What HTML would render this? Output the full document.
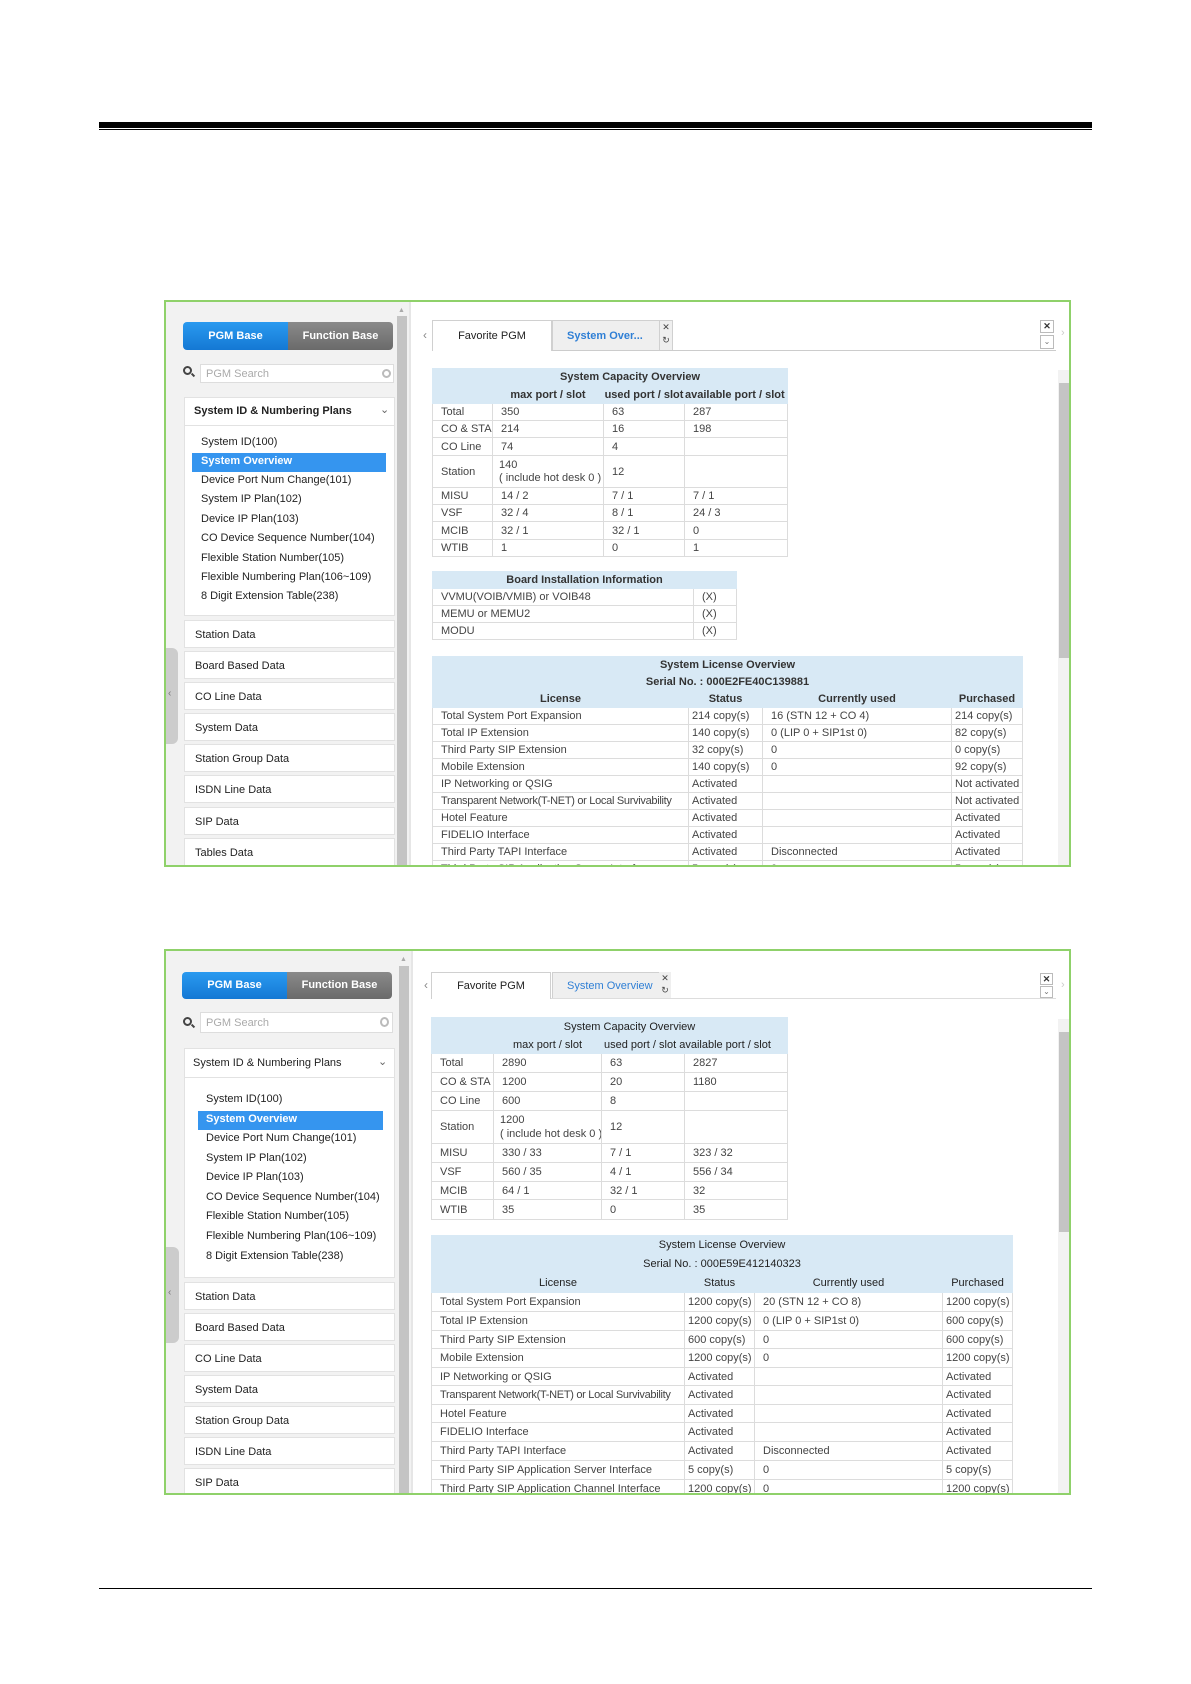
<!DOCTYPE html>
<html><head><meta charset="utf-8">
<style>
*{margin:0;padding:0;box-sizing:border-box}
body{width:1191px;height:1684px;background:#fff;position:relative;font-family:"Liberation Sans",Arial,sans-serif;color:#333;overflow:hidden}
.a{position:absolute}
.panel{position:absolute;border:2px solid #8fd16a;background:#fff;overflow:hidden}
.lp{position:absolute;background:#f2f2f2}
.btn{position:absolute;color:#fff;font-size:11px;text-align:center;font-weight:bold}
.box{position:absolute;background:#fff;border:1px solid #e2e2e2;font-size:11px;color:#222}
.item{position:absolute;font-size:11px;color:#222;white-space:nowrap}
table{position:absolute;border-collapse:collapse;table-layout:fixed;font-size:11px;color:#444}
td,th{border:1px solid #dcdcdc;padding:0 0 0 8px;white-space:nowrap;overflow:hidden;text-align:left;font-weight:normal}
th{background:#d8e9f5;color:#333;font-weight:bold;text-align:center;border-color:#d8e9f5;padding:0}
.tab{position:absolute;border:1px solid #d0d0d0;border-bottom:none;font-size:11px;text-align:center}
.srch{position:absolute;width:9px;height:9px;border:2px solid #444;border-radius:50%}
.srch:after{content:"";position:absolute;left:6px;top:6px;width:4px;height:2px;background:#444;transform:rotate(45deg)}
</style></head><body>

<div class="a" style="left:99px;top:122px;width:993px;height:6px;background:#000"></div>
<div class="a" style="left:99px;top:129px;width:993px;height:1px;background:#000"></div>
<div class="a" style="left:99px;top:1588px;width:993px;height:1px;background:#000"></div>

<!-- PANEL 1 -->
<div class="panel" style="left:164px;top:300px;width:907px;height:567px">
 <div class="lp" style="left:0;top:0;width:243px;height:565px"></div>
 <div class="a" style="left:231px;top:14px;width:10px;height:551px;background:#c4c4c4"></div>
 <div class="a" style="left:232px;top:5px;font-size:7px;color:#aaa">▲</div>
 <div class="a" style="left:243px;top:0;width:2px;height:565px;background:#e6e6e6"></div>
 <div class="a" style="left:0;top:346px;width:12px;height:96px;background:#ccc;border-radius:0 6px 6px 0"></div>
 <div class="a" style="left:2px;top:386px;font-size:10px;color:#777">‹</div>
 <div class="btn" style="left:17px;top:20px;width:105px;height:28px;line-height:28px;background:linear-gradient(#2a9af0,#1478d4);border-radius:4px 0 0 4px">PGM Base</div>
 <div class="btn" style="left:122px;top:20px;width:105px;height:28px;line-height:28px;background:linear-gradient(#8a8a8a,#6a6a6a);border-radius:0 4px 4px 0">Function Base</div>
 <div class="srch" style="left:17px;top:64px"></div>
 <div class="a" style="left:34px;top:62px;width:194px;height:19px;background:#fff;border:1px solid #ddd;font-size:11px;color:#aaa;padding:3px 5px">PGM Search</div>
 <div class="a" style="left:216px;top:67px;width:9px;height:9px;border-radius:50%;border:2px solid #bbb"></div>
 <div class="box" style="left:18px;top:95px;width:211px;height:219px"></div>
 <div class="a" style="left:18px;top:123px;width:211px;height:1px;background:#e2e2e2"></div>
 <div class="item" style="left:28px;top:103px;font-weight:bold">System ID &amp; Numbering Plans</div>
 <div class="item" style="left:214px;top:101px;color:#666">⌄</div>
 <div class="a" style="left:26px;top:151px;width:194px;height:19px;background:#3595ef"></div>
 <div class="item" style="left:35px;top:134px">System ID(100)</div>
 <div class="item" style="left:35px;top:153px;color:#fff;font-weight:bold">System Overview</div>
 <div class="item" style="left:35px;top:172px">Device Port Num Change(101)</div>
 <div class="item" style="left:35px;top:191px">System IP Plan(102)</div>
 <div class="item" style="left:35px;top:211px">Device IP Plan(103)</div>
 <div class="item" style="left:35px;top:230px">CO Device Sequence Number(104)</div>
 <div class="item" style="left:35px;top:250px">Flexible Station Number(105)</div>
 <div class="item" style="left:35px;top:269px">Flexible Numbering Plan(106~109)</div>
 <div class="item" style="left:35px;top:288px">8 Digit Extension Table(238)</div>
 <div class="box" style="left:18px;top:318px;width:211px;height:28px;padding:8px 10px">Station Data</div>
 <div class="box" style="left:18px;top:349px;width:211px;height:28px;padding:8px 10px">Board Based Data</div>
 <div class="box" style="left:18px;top:380px;width:211px;height:28px;padding:8px 10px">CO Line Data</div>
 <div class="box" style="left:18px;top:411px;width:211px;height:28px;padding:8px 10px">System Data</div>
 <div class="box" style="left:18px;top:442px;width:211px;height:28px;padding:8px 10px">Station Group Data</div>
 <div class="box" style="left:18px;top:473px;width:211px;height:28px;padding:8px 10px">ISDN Line Data</div>
 <div class="box" style="left:18px;top:505px;width:211px;height:28px;padding:8px 10px">SIP Data</div>
 <div class="box" style="left:18px;top:536px;width:211px;height:28px;padding:8px 10px">Tables Data</div>

 <div class="a" style="left:257px;top:26px;font-size:12px;color:#888">‹</div>
 <div class="a" style="left:266px;top:48px;width:624px;height:1px;background:#ccc"></div>
 <div class="tab" style="left:266px;top:18px;width:120px;height:31px;line-height:30px;background:#fff;color:#222">Favorite PGM</div>
 <div class="tab" style="left:386px;top:18px;width:108px;height:30px;line-height:30px;background:#efefef;color:#2f7fd5;font-weight:bold;text-align:left;padding-left:14px">System Over...</div>
 <div class="a" style="left:493px;top:18px;width:14px;height:30px;background:#efefef;border:1px solid #d0d0d0;border-bottom:none;font-size:9px;color:#444;text-align:center;line-height:13px">✕<br>↻</div>
 <div class="a" style="left:874px;top:18px;width:14px;height:13px;border:1px solid #bbb;font-size:9px;text-align:center;line-height:11px;font-weight:bold">✕</div>
 <div class="a" style="left:874px;top:33px;width:14px;height:14px;border:1px solid #bbb;font-size:8px;text-align:center;line-height:12px;color:#777">⌄</div>
 <div class="a" style="left:895px;top:25px;font-size:11px;color:#ccc">›</div>
 <div class="a" style="left:892px;top:68px;width:11px;height:497px;background:#f2f2f2"></div>
 <div class="a" style="left:893px;top:81px;width:10px;height:275px;background:#c4c4c4"></div>

 <table style="left:266px;top:66px;width:355px">
  <colgroup><col style="width:60px"><col style="width:111px"><col style="width:81px"><col style="width:103px"></colgroup>
  <tr style="height:17px"><th colspan="4" style="padding-left:40px">System Capacity Overview</th></tr>
  <tr style="height:18px"><th></th><th>max port / slot</th><th>used port / slot</th><th style="text-align:left">available port / slot</th></tr>
  <tr style="height:17px"><td>Total</td><td>350</td><td>63</td><td>287</td></tr>
  <tr style="height:17px"><td>CO &amp; STA</td><td>214</td><td>16</td><td>198</td></tr>
  <tr style="height:18px"><td>CO Line</td><td>74</td><td>4</td><td></td></tr>
  <tr style="height:32px"><td>Station</td><td style="line-height:13px;padding-left:6px">140<br>( include hot desk 0 )</td><td>12</td><td></td></tr>
  <tr style="height:17px"><td>MISU</td><td>14 / 2</td><td>7 / 1</td><td>7 / 1</td></tr>
  <tr style="height:17px"><td>VSF</td><td>32 / 4</td><td>8 / 1</td><td>24 / 3</td></tr>
  <tr style="height:18px"><td>MCIB</td><td>32 / 1</td><td>32 / 1</td><td>0</td></tr>
  <tr style="height:17px"><td>WTIB</td><td>1</td><td>0</td><td>1</td></tr>
 </table>

 <table style="left:266px;top:269px;width:304px">
  <colgroup><col style="width:261px"><col style="width:43px"></colgroup>
  <tr style="height:17px"><th colspan="2">Board Installation Information</th></tr>
  <tr style="height:17px"><td>VVMU(VOIB/VMIB) or VOIB48</td><td>(X)</td></tr>
  <tr style="height:17px"><td>MEMU or MEMU2</td><td>(X)</td></tr>
  <tr style="height:17px"><td>MODU</td><td>(X)</td></tr>
 </table>

 <table style="left:266px;top:354px;width:590px">
  <colgroup><col style="width:256px"><col style="width:74px"><col style="width:189px"><col style="width:71px"></colgroup>
  <tr style="height:17px"><th colspan="4">System License Overview</th></tr>
  <tr style="height:16px"><th colspan="4">Serial No. : 000E2FE40C139881</th></tr>
  <tr style="height:18px"><th>License</th><th>Status</th><th>Currently used</th><th>Purchased</th></tr>
  <tr style="height:17px"><td>Total System Port Expansion</td><td style="padding-left:3px">214 copy(s)</td><td>16 (STN 12 + CO 4)</td><td style="padding-left:3px">214 copy(s)</td></tr>
  <tr style="height:17px"><td>Total IP Extension</td><td style="padding-left:3px">140 copy(s)</td><td>0 (LIP 0 + SIP1st 0)</td><td style="padding-left:3px">82 copy(s)</td></tr>
  <tr style="height:17px"><td>Third Party SIP Extension</td><td style="padding-left:3px">32 copy(s)</td><td>0</td><td style="padding-left:3px">0 copy(s)</td></tr>
  <tr style="height:17px"><td>Mobile Extension</td><td style="padding-left:3px">140 copy(s)</td><td>0</td><td style="padding-left:3px">92 copy(s)</td></tr>
  <tr style="height:17px"><td>IP Networking or QSIG</td><td style="padding-left:3px">Activated</td><td></td><td style="padding-left:3px">Not activated</td></tr>
  <tr style="height:17px"><td style="letter-spacing:-0.3px">Transparent Network(T-NET) or Local Survivability</td><td style="padding-left:3px">Activated</td><td></td><td style="padding-left:3px">Not activated</td></tr>
  <tr style="height:17px"><td>Hotel Feature</td><td style="padding-left:3px">Activated</td><td></td><td style="padding-left:3px">Activated</td></tr>
  <tr style="height:17px"><td>FIDELIO Interface</td><td style="padding-left:3px">Activated</td><td></td><td style="padding-left:3px">Activated</td></tr>
  <tr style="height:17px"><td>Third Party TAPI Interface</td><td style="padding-left:3px">Activated</td><td>Disconnected</td><td style="padding-left:3px">Activated</td></tr>
  <tr style="height:17px"><td>Third Party SIP Application Server Interface</td><td style="padding-left:3px">5 copy(s)</td><td>0</td><td style="padding-left:3px">5 copy(s)</td></tr>
 </table>
</div>

<!-- PANEL 2 -->
<div class="panel" style="left:164px;top:949px;width:907px;height:546px">
 <div class="lp" style="left:0;top:0;width:245px;height:544px"></div>
 <div class="a" style="left:233px;top:15px;width:10px;height:529px;background:#c4c4c4"></div>
 <div class="a" style="left:234px;top:5px;font-size:7px;color:#aaa">▲</div>
 <div class="a" style="left:245px;top:0;width:2px;height:544px;background:#e6e6e6"></div>
 <div class="a" style="left:0;top:296px;width:13px;height:96px;background:#ccc;border-radius:0 6px 6px 0"></div>
 <div class="a" style="left:2px;top:336px;font-size:10px;color:#777">‹</div>
 <div class="btn" style="left:16px;top:21px;width:105px;height:27px;line-height:27px;background:linear-gradient(#2a9af0,#1478d4);border-radius:4px 0 0 4px">PGM Base</div>
 <div class="btn" style="left:121px;top:21px;width:105px;height:27px;line-height:27px;background:linear-gradient(#8a8a8a,#6a6a6a);border-radius:0 4px 4px 0">Function Base</div>
 <div class="srch" style="left:17px;top:66px"></div>
 <div class="a" style="left:34px;top:61px;width:193px;height:21px;background:#fff;border:1px solid #ddd;font-size:11px;color:#aaa;padding:4px 5px">PGM Search</div>
 <div class="a" style="left:214px;top:66px;width:9px;height:10px;border-radius:50%;border:2px solid #bbb"></div>
 <div class="box" style="left:18px;top:97px;width:211px;height:230px"></div>
 <div class="a" style="left:18px;top:126px;width:211px;height:1px;background:#e2e2e2"></div>
 <div class="item" style="left:27px;top:106px">System ID &amp; Numbering Plans</div>
 <div class="item" style="left:212px;top:104px;color:#666">⌄</div>
 <div class="a" style="left:32px;top:160px;width:185px;height:19px;background:#3595ef"></div>
 <div class="item" style="left:40px;top:142px">System ID(100)</div>
 <div class="item" style="left:40px;top:162px;color:#fff;font-weight:bold">System Overview</div>
 <div class="item" style="left:40px;top:181px">Device Port Num Change(101)</div>
 <div class="item" style="left:40px;top:201px">System IP Plan(102)</div>
 <div class="item" style="left:40px;top:220px">Device IP Plan(103)</div>
 <div class="item" style="left:40px;top:240px">CO Device Sequence Number(104)</div>
 <div class="item" style="left:40px;top:259px">Flexible Station Number(105)</div>
 <div class="item" style="left:40px;top:279px">Flexible Numbering Plan(106~109)</div>
 <div class="item" style="left:40px;top:299px">8 Digit Extension Table(238)</div>
 <div class="box" style="left:18px;top:331px;width:211px;height:28px;padding:8px 10px">Station Data</div>
 <div class="box" style="left:18px;top:362px;width:211px;height:28px;padding:8px 10px">Board Based Data</div>
 <div class="box" style="left:18px;top:393px;width:211px;height:28px;padding:8px 10px">CO Line Data</div>
 <div class="box" style="left:18px;top:424px;width:211px;height:28px;padding:8px 10px">System Data</div>
 <div class="box" style="left:18px;top:455px;width:211px;height:28px;padding:8px 10px">Station Group Data</div>
 <div class="box" style="left:18px;top:486px;width:211px;height:28px;padding:8px 10px">ISDN Line Data</div>
 <div class="box" style="left:18px;top:517px;width:211px;height:28px;padding:8px 10px">SIP Data</div>

 <div class="a" style="left:258px;top:27px;font-size:12px;color:#888">‹</div>
 <div class="a" style="left:265px;top:47px;width:625px;height:1px;background:#ddd"></div>
 <div class="tab" style="left:265px;top:21px;width:120px;height:27px;line-height:26px;background:#fff;color:#222">Favorite PGM</div>
 <div class="tab" style="left:386px;top:21px;width:108px;height:26px;line-height:26px;background:#efefef;color:#2f7fd5;text-align:left;padding-left:14px">System Overview</div>
 <div class="a" style="left:493px;top:21px;width:12px;height:26px;background:#efefef;font-size:9px;color:#444;text-align:center;line-height:12px">✕<br>↻</div>
 <div class="a" style="left:874px;top:22px;width:13px;height:12px;border:1px solid #bbb;font-size:9px;text-align:center;line-height:10px;font-weight:bold">✕</div>
 <div class="a" style="left:874px;top:35px;width:13px;height:12px;border:1px solid #bbb;font-size:8px;text-align:center;line-height:10px;color:#777">⌄</div>
 <div class="a" style="left:895px;top:28px;font-size:11px;color:#ccc">›</div>
 <div class="a" style="left:892px;top:68px;width:11px;height:476px;background:#f2f2f2"></div>
 <div class="a" style="left:893px;top:81px;width:10px;height:200px;background:#c4c4c4"></div>

 <table style="left:265px;top:66px;width:356px">
  <colgroup><col style="width:62px"><col style="width:108px"><col style="width:83px"><col style="width:103px"></colgroup>
  <tr style="height:18px"><th colspan="4" style="font-weight:normal;color:#222;padding-left:40px">System Capacity Overview</th></tr>
  <tr style="height:18px"><th style="font-weight:normal"></th><th style="font-weight:normal;color:#222">max port / slot</th><th colspan="2" style="font-weight:normal;color:#222;text-align:left;padding-left:2px">used port / slot available port / slot</th></tr>
  <tr style="height:19px"><td>Total</td><td>2890</td><td>63</td><td>2827</td></tr>
  <tr style="height:19px"><td>CO &amp; STA</td><td>1200</td><td>20</td><td>1180</td></tr>
  <tr style="height:19px"><td>CO Line</td><td>600</td><td>8</td><td></td></tr>
  <tr style="height:33px"><td>Station</td><td style="line-height:14px;padding-left:6px">1200<br>( include hot desk 0 )</td><td>12</td><td></td></tr>
  <tr style="height:19px"><td>MISU</td><td>330 / 33</td><td>7 / 1</td><td>323 / 32</td></tr>
  <tr style="height:19px"><td>VSF</td><td>560 / 35</td><td>4 / 1</td><td>556 / 34</td></tr>
  <tr style="height:18px"><td>MCIB</td><td>64 / 1</td><td>32 / 1</td><td>32</td></tr>
  <tr style="height:20px"><td>WTIB</td><td>35</td><td>0</td><td>35</td></tr>
 </table>

 <table style="left:265px;top:284px;width:581px">
  <colgroup><col style="width:253px"><col style="width:70px"><col style="width:188px"><col style="width:70px"></colgroup>
  <tr style="height:19px"><th colspan="4" style="font-weight:normal;color:#222">System License Overview</th></tr>
  <tr style="height:19px"><th colspan="4" style="font-weight:normal;color:#222">Serial No. : 000E59E412140323</th></tr>
  <tr style="height:19px"><th style="font-weight:normal;color:#222">License</th><th style="font-weight:normal;color:#222">Status</th><th style="font-weight:normal;color:#222">Currently used</th><th style="font-weight:normal;color:#222">Purchased</th></tr>
  <tr style="height:19px"><td>Total System Port Expansion</td><td style="padding-left:3px">1200 copy(s)</td><td>20 (STN 12 + CO 8)</td><td style="padding-left:3px">1200 copy(s)</td></tr>
  <tr style="height:19px"><td>Total IP Extension</td><td style="padding-left:3px">1200 copy(s)</td><td>0 (LIP 0 + SIP1st 0)</td><td style="padding-left:3px">600 copy(s)</td></tr>
  <tr style="height:18px"><td>Third Party SIP Extension</td><td style="padding-left:3px">600 copy(s)</td><td>0</td><td style="padding-left:3px">600 copy(s)</td></tr>
  <tr style="height:19px"><td>Mobile Extension</td><td style="padding-left:3px">1200 copy(s)</td><td>0</td><td style="padding-left:3px">1200 copy(s)</td></tr>
  <tr style="height:18px"><td>IP Networking or QSIG</td><td style="padding-left:3px">Activated</td><td></td><td style="padding-left:3px">Activated</td></tr>
  <tr style="height:19px"><td style="letter-spacing:-0.3px">Transparent Network(T-NET) or Local Survivability</td><td style="padding-left:3px">Activated</td><td></td><td style="padding-left:3px">Activated</td></tr>
  <tr style="height:18px"><td>Hotel Feature</td><td style="padding-left:3px">Activated</td><td></td><td style="padding-left:3px">Activated</td></tr>
  <tr style="height:19px"><td>FIDELIO Interface</td><td style="padding-left:3px">Activated</td><td></td><td style="padding-left:3px">Activated</td></tr>
  <tr style="height:19px"><td>Third Party TAPI Interface</td><td style="padding-left:3px">Activated</td><td>Disconnected</td><td style="padding-left:3px">Activated</td></tr>
  <tr style="height:19px"><td>Third Party SIP Application Server Interface</td><td style="padding-left:3px">5 copy(s)</td><td>0</td><td style="padding-left:3px">5 copy(s)</td></tr>
  <tr style="height:19px"><td>Third Party SIP Application Channel Interface</td><td style="padding-left:3px">1200 copy(s)</td><td>0</td><td style="padding-left:3px">1200 copy(s)</td></tr>
 </table>
</div>
</body></html>
